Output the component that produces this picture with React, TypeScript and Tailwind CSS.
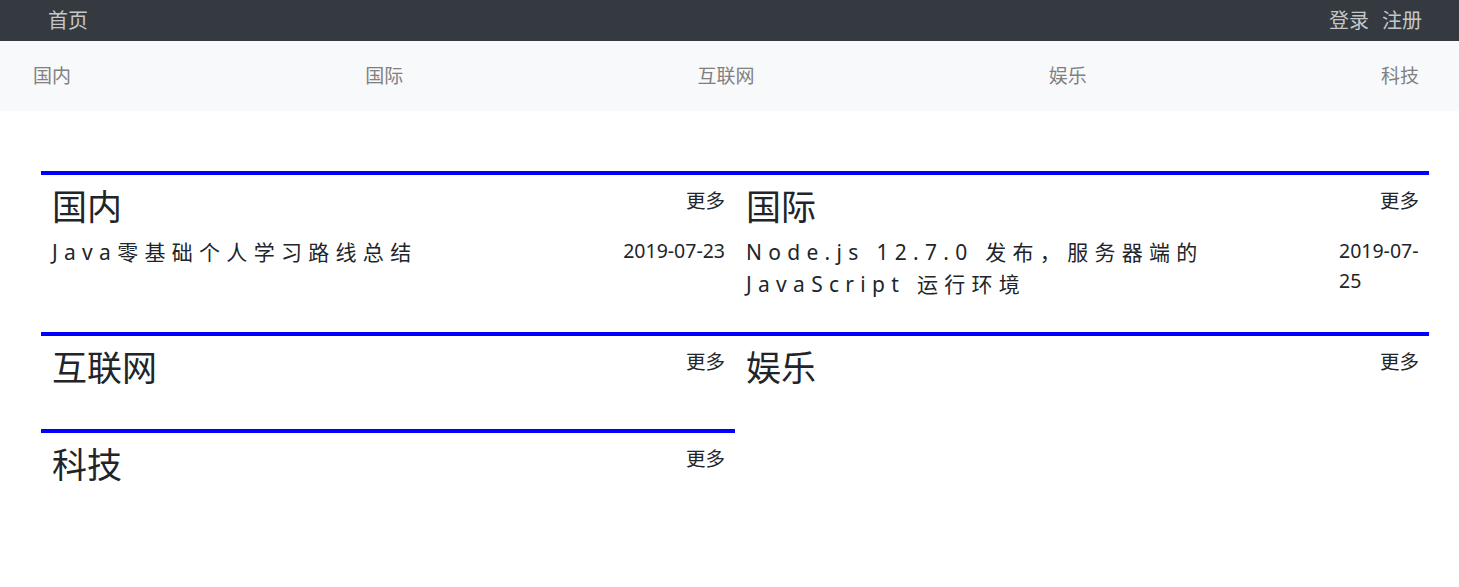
const topLinks = ["国内", "国际", "互联网", "娱乐", "科技"];

type Item = { title: string; date: string };
type Section = { name: string; items: Item[] };

const sections: Section[] = [
  { name: "国内", items: [{ title: "Java零基础个人学习路线总结", date: "2019-07-23" }] },
  {
    name: "国际",
    items: [{ title: "Node.js 12.7.0 发布，服务器端的 JavaScript 运行环境", date: "2019-07-25" }],
  },
  { name: "互联网", items: [] },
  { name: "娱乐", items: [] },
  { name: "科技", items: [] },
];

function SectionCard({ section }: { section: Section }) {
  return (
    <div className="border-t-4 border-[#0000ff] pl-[11px] pr-[10px] pt-[10px] pb-[32px] text-[#212529]">
      <div className="flex items-start justify-between">
        <h2 className="text-[35px] leading-[43px] font-normal">{section.name}</h2>
        <a className="text-[19.5px] leading-[31px]">更多</a>
      </div>
      <ul className="mt-2">
        {section.items.map((item) => (
          <li key={item.title} className="flex justify-between gap-[4px]">
            <span className="text-[21px] leading-[32px] tracking-[6.3px]">{item.title}</span>
            <span className="text-[19.5px] leading-[30px]">{item.date}</span>
          </li>
        ))}
      </ul>
    </div>
  );
}

export default function App() {
  return (
    <div className="min-h-screen bg-white font-['Noto_Sans','Noto_Sans_CJK_SC',sans-serif]">
      <header className="flex h-[41px] items-center justify-between bg-[#343a40] pl-[48px] pr-[37px] text-[20px] text-[#c5c6c8]">
        <a>首页</a>
        <div className="flex gap-[13px]">
          <a>登录</a>
          <a>注册</a>
        </div>
      </header>
      <nav className="flex h-[70px] items-center justify-between bg-[#f8f9fa] pl-[33px] pr-[40px] text-[19px] text-[#808080]">
        {topLinks.map((l) => (
          <a key={l}>{l}</a>
        ))}
      </nav>
      <main className="pl-[41px] pr-[30px] pt-[60px]">
        <div className="grid grid-cols-2">
          {sections.map((s) => (
            <SectionCard key={s.name} section={s} />
          ))}
        </div>
      </main>
    </div>
  );
}
